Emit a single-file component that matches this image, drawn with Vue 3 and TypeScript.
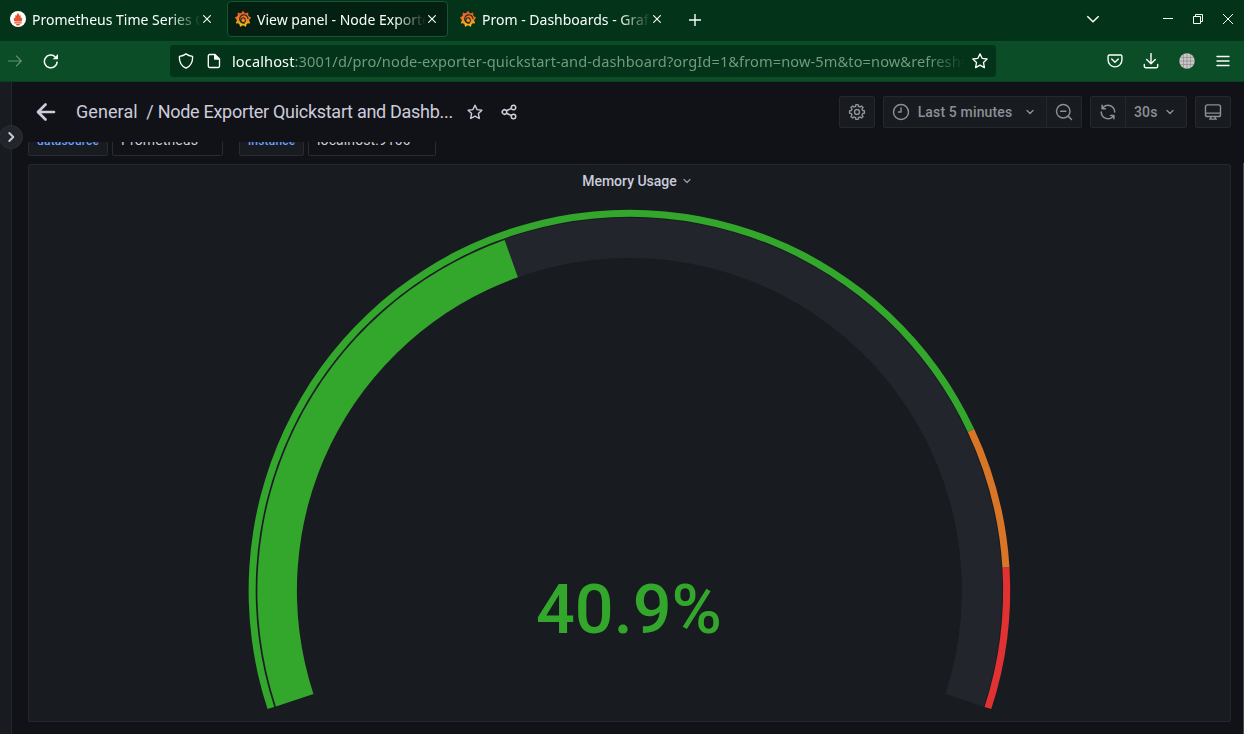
<script setup lang="ts">
interface Tab {
  title: string
  logo: 'prometheus' | 'grafana'
  active: boolean
}

const tabs: Tab[] = [
  { title: 'Prometheus Time Series Collection', logo: 'prometheus', active: false },
  { title: 'View panel - Node Exporter', logo: 'grafana', active: true },
  { title: 'Prom - Dashboards - Grafana', logo: 'grafana', active: false },
]

const cx = 600.4
const cy = 393.5
const startAngle = 198.15
const sweep = 216.3

function point(radius: number, percent: number): [number, number] {
  const angle = ((startAngle - (percent * sweep) / 100) * Math.PI) / 180
  return [cx + radius * Math.cos(angle), cy - radius * Math.sin(angle)]
}

function arc(inner: number, outer: number, from: number, to: number): string {
  const large = ((to - from) * sweep) / 100 > 180 ? 1 : 0
  const f = (p: [number, number]) => `${p[0].toFixed(2)} ${p[1].toFixed(2)}`
  return (
    `M${f(point(outer, from))}A${outer} ${outer} 0 ${large} 1 ${f(point(outer, to))}` +
    `L${f(point(inner, to))}A${inner} ${inner} 0 ${large} 0 ${f(point(inner, from))}Z`
  )
}

function gear(center: number, outer: number, inner: number, teeth: number, topRatio: number): string {
  const step = (Math.PI * 2) / teeth
  const parts: string[] = []
  for (let i = 0; i < teeth; i++) {
    const a = i * step
    const offsets: [number, number][] = [
      [-step * 0.29, inner],
      [-step * topRatio, outer],
      [step * topRatio, outer],
      [step * 0.29, inner],
    ]
    for (const [d, r] of offsets) {
      parts.push(`${(center + r * Math.sin(a + d)).toFixed(2)} ${(center - r * Math.cos(a + d)).toFixed(2)}`)
    }
  }
  return `M${parts.join('L')}Z`
}

const usage = 40.94
const track = arc(332.5, 372.8, 0, 100)
const bar = arc(332.5, 372, 0, usage)
const thresholds = [
  { color: '#32a72c', d: arc(373.7, 380.8, 0, 80) },
  { color: '#d87527', d: arc(373.7, 380.8, 80, 90) },
  { color: '#e03133', d: arc(373.7, 380.8, 90, 100) },
]
const cog = gear(12, 10, 7.9, 8, 0.2)
const sun = gear(8, 8, 6.5, 9, 0.08)
</script>

<template>
  <div class="window">
    <div class="tabbar">
      <div v-for="tab in tabs" :key="tab.title" class="tab" :class="{ active: tab.active }">
        <svg v-if="tab.logo === 'prometheus'" class="logo" viewBox="0 0 16 16">
          <circle cx="8" cy="8" r="8" fill="#fff" />
          <path d="M8 1.4c.3 1.4 1.5 2 1.4 3.7.5-.4.6-.9.6-1.5 1.1 1.4.3 2.6 1.1 4 .2-.5.5-.8.9-1 .1 1.5.6 2.4-.6 4H4.6C3.4 9 3.9 8.200 4 6.600c.4.2.7.5.9 1 .8-1.400 0-2.600 1.100-4 0 .6.1 1.100.6 1.500C6.500 3.400 7.700 2.800 8 1.400ZM4.300 11.300h7.400v1.100H4.300ZM5.900 13h4.200c-.3 1.100-1.100 1.600-2.100 1.600S6.200 14.100 5.900 13Z" fill="#e6522c" />
        </svg>
        <svg v-else class="logo" viewBox="0 0 16 16">
          <defs>
            <linearGradient id="sunfill" x1="0" y1="0" x2="0" y2="1">
              <stop offset="0" stop-color="#f0522b" />
              <stop offset="0.5" stop-color="#f57a24" />
              <stop offset="1" stop-color="#fcc31b" />
            </linearGradient>
          </defs>
          <path :d="sun" fill="url(#sunfill)" />
          <path d="M13 7.600A4.200 4.200 0 1 0 9.300 12.200M10.600 9.600A2.400 2.400 0 1 1 8.300 6.800C9.500 6.700 10.300 7.700 10 8.600" fill="none" stroke="#1c3019" stroke-width="1.100" stroke-linecap="round" />
        </svg>
        <div class="tab-title"><span>{{ tab.title }}</span></div>
        <svg class="tab-close" viewBox="0 0 8 8"><path d="M.3.3 7.700 7.700M7.700.3.3 7.700" /></svg>
      </div>
      <svg class="plus" viewBox="0 0 12 12"><path d="M6 0V12M0 6H12" /></svg>
      <div class="window-controls">
        <svg class="chev" width="14" height="8" viewBox="0 0 14 8"><path d="M1.300 1.200 7 6.700 12.700 1.200" /></svg>
        <svg width="12" height="12" viewBox="0 0 12 12"><path d="M1 5.500H11" /></svg>
        <svg width="12" height="12" viewBox="0 0 12 12"><path d="M1.500 3.500H8.500V10.500H1.500ZM3.500 3.500V1.500H10.500V8.500H8.500" /></svg>
        <svg width="12" height="12" viewBox="0 0 12 12"><path d="M1 1 11 11M11 1 1 11" /></svg>
      </div>
    </div>

    <div class="toolbar">
      <svg class="forward" viewBox="0 0 16 16"><path d="M1 8H14.500M9 2.700 14.300 8 9 13.300" /></svg>
      <svg class="reload" viewBox="0 0 16 16">
        <path d="M14.200 8.600A6.400 6.400 0 1 1 12.400 3.900" />
        <path d="M15 .9V6.200H9.700Z" class="solid" />
      </svg>
      <div class="urlbar">
        <svg class="shield" viewBox="0 0 16 16"><path d="M8 .9C10 2.400 12.200 3 14.500 3.300 15 8.500 12.500 13 8 15.200 3.500 13 1 8.500 1.500 3.300 3.800 3 6 2.400 8 .9Z" /></svg>
        <svg class="page-icon" viewBox="0 0 16 16"><path d="M3.700 1.500H9L13.500 6V13.100A1.400 1.400 0 0 1 12.100 14.500H3.700A1.400 1.400 0 0 1 2.300 13.100V2.900A1.400 1.400 0 0 1 3.700 1.500ZM8.700 1.500V6H13.500" /><path class="solid" d="M9 1.500 13.500 6H9Z" /></svg>
        <div class="url"><span><b>localhost</b>:3001/d/pro/node-exporter-quickstart-and-dashboard?orgId=1&amp;from=now-5m&amp;to=now&amp;refresh=30s</span></div>
        <svg class="bookmark" viewBox="0 0 16 16"><path d="M8 .9 10.100 5.300 15.100 6 11.500 9.500 12.400 14.600 8 12.200 3.600 14.600 4.500 9.500 .9 6 5.900 5.300Z" /></svg>
      </div>
      <div class="actions">
        <svg viewBox="0 0 16 16"><path d="M2.300 2H13.700A1.200 1.200 0 0 1 14.900 3.200V7A6.900 6.900 0 0 1 1.100 7V3.200A1.200 1.200 0 0 1 2.300 2ZM4.700 6 8 9.200 11.300 6" /></svg>
        <svg viewBox="0 0 16 16"><path d="M8 .5V10.500M3.700 6.500 8 10.800 12.300 6.500M1.300 11.500V13.200A1.500 1.500 0 0 0 2.800 14.700H13.200A1.500 1.500 0 0 0 14.700 13.200V11.500" /></svg>
        <svg viewBox="0 0 16 16">
          <circle cx="8" cy="8" r="7.700" fill="#c8c8c8" stroke="none" />
          <path class="grid" d="M8 .5V15.500M4.500 1.500V14.500M11.500 1.500V14.500M.5 8H15.500M1.500 4.500H14.500M1.500 11.500H14.500" />
        </svg>
        <svg viewBox="0 0 16 16"><path d="M2 3.500H14M2 8H14M2 12.500H14" /></svg>
      </div>
    </div>

    <div class="app">
      <aside class="rail">
        <button class="expand"><svg viewBox="0 0 12 12"><path d="M4.300 2 8.300 6 4.300 10" /></svg></button>
      </aside>
      <main class="content">
        <header class="topnav">
          <svg class="back" viewBox="0 0 20 20"><path d="M18 10H2.500M9.500 2.500 2 10 9.500 17.500" /></svg>
          <h1><span class="folder">General</span><span class="slash">/</span><span class="dashboard">Node Exporter Quickstart and Dashb...</span></h1>
          <svg class="star" viewBox="0 0 16 16"><path d="M8 1.200 10.100 5.600 14.900 6.200 11.400 9.600 12.300 14.500 8 12.100 3.700 14.500 4.600 9.600 1.100 6.200 5.900 5.600Z" /></svg>
          <svg class="share" viewBox="0 0 24 24"><path d="M18,14a4,4,0,0,0-3.080,1.480l-5.100-2.350a3.640,3.640,0,0,0,0-2.260l5.100-2.350A4,4,0,1,0,14,6a4.170,4.170,0,0,0,.07.71L8.790,9.140a4,4,0,1,0,0,5.720l5.280,2.430A4.170,4.170,0,0,0,14,18a4,4,0,1,0,4-4ZM18,4a2,2,0,1,1-2,2A2,2,0,0,1,18,4ZM6,14a2,2,0,1,1,2-2A2,2,0,0,1,6,14Zm12,6a2,2,0,1,1,2-2A2,2,0,0,1,18,20Z" /></svg>
          <div class="tools">
            <div class="group"><button class="square"><svg viewBox="0 0 24 24"><path :d="cog" /><circle cx="12" cy="12" r="3.300" /></svg></button></div>
            <div class="group">
              <button class="range">
                <svg viewBox="0 0 24 24"><circle cx="12" cy="12" r="10" /><path d="M12 6.500V12H8.500" /></svg>
                <span>Last 5 minutes</span>
                <svg class="caret" viewBox="0 0 14 14"><path d="M4 5.500 7 8.500 10 5.500" /></svg>
              </button>
              <button class="square"><svg viewBox="0 0 24 24"><circle cx="11" cy="11" r="9" /><path d="M7.500 11H14.500M17.500 17.500 22 22" /></svg></button>
            </div>
            <div class="group">
              <button class="square"><svg viewBox="0 0 24 24" class="filled"><path d="M19.910,15.510H15.380a1,1,0,0,0,0,2h2.400A8,8,0,0,1,4,12a1,1,0,1,0-2,0,10,10,0,0,0,16.880,7.230V21a1,1,0,0,0,2,0V16.500A1,1,0,0,0,19.910,15.510ZM12,2A10,10,0,0,0,5.120,4.770V3a1,1,0,0,0-2,0V7.500a1,1,0,0,0,1,1h4.500a1,1,0,0,0,0-2H6.220A8,8,0,0,1,20,12a1,1,0,0,0,2,0A10,10,0,0,0,12,2Z" /></svg></button>
              <button class="interval"><span>30s</span><svg class="caret" viewBox="0 0 14 14"><path d="M4 5.500 7 8.500 10 5.500" /></svg></button>
            </div>
            <div class="group"><button class="square"><svg viewBox="0 0 24 24"><path d="M4.500 2.500H19.500A2.500 2.500 0 0 1 22 5V15.500A2.500 2.500 0 0 1 19.500 18H4.500A2.500 2.500 0 0 1 2 15.500V5A2.500 2.500 0 0 1 4.500 2.500ZM2 13.500H22M9 18V21.500M15 18V21.500M7.500 21.500H16.500" /></svg></button></div>
          </div>
        </header>
        <div class="variables">
          <label class="name ds">datasource</label><div class="value ds-value">Prometheus</div>
          <label class="name inst">instance</label><div class="value inst-value">localhost:9100</div>
        </div>
        <section class="panel">
          <h2>Memory Usage<svg class="caret" viewBox="0 0 14 14"><path d="M4 5.500 7 8.500 10 5.500" /></svg></h2>
          <svg class="gauge" width="1201" height="524" viewBox="0 0 1201 524">
            <path :d="track" fill="#22252b" />
            <path :d="bar" fill="#32a72c" />
            <path v-for="t in thresholds" :key="t.color" :d="t.d" :fill="t.color" />
            <text x="600" y="436" text-anchor="middle">{{ usage.toFixed(1) }}%</text>
          </svg>
        </section>
        <div class="scroll-thumb"></div>
      </main>
    </div>
  </div>
</template>

<style>
html,
body {
  margin: 0;
  background: #111217;
  overflow: hidden;
}
</style>

<style scoped>
* { box-sizing: border-box; }
svg { display: block; flex: none; fill: none; stroke: currentColor; }
button { font: inherit; letter-spacing: inherit; color: inherit; padding: 0; margin: 0; border: 0; background: none; }
.window { width: 1244px; height: 734px; display: flex; flex-direction: column; overflow: hidden; color: #fbfffc; font-family: 'Noto Sans', 'Open Sans', sans-serif; }

.tabbar { height: 41px; background: #033318; display: flex; align-items: flex-start; padding: 1px 0 0 2px; gap: 4px; }
.tab { width: 221px; height: 36px; display: flex; align-items: center; border: 1px solid transparent; border-radius: 4px; padding-left: 7px; }
.tab.active { background: #042012; border-color: #155632; }
.logo { width: 16px; height: 16px; stroke: none; }
.tab-title { margin-left: 6px; width: 171px; overflow: hidden; white-space: nowrap; font-size: 14px; line-height: 22px; padding-top: 1px; -webkit-mask-image: linear-gradient(to right, #000 137px, transparent 169px); mask-image: linear-gradient(to right, #000 137px, transparent 169px); }
.tab-close { width: 8px; height: 8px; stroke-width: 1.1; }
.plus { width: 12px; height: 12px; margin: 13px 0 0 12px; stroke-width: 1.4; }
.window-controls { margin-left: auto; display: flex; align-items: center; height: 36px; gap: 18px; padding-right: 10px; }
.chev { margin-right: 44px; stroke-width: 1.5; }

.toolbar { height: 41px; background: #0a4d27; display: flex; align-items: center; padding-left: 7px; border-bottom: 1px solid #07421f; }
.forward { width: 16px; height: 16px; color: #63917a; stroke-width: 1.2; }
.reload { width: 16px; height: 16px; margin-left: 20px; stroke-width: 1.5; }
.solid { fill: currentColor; stroke: none; }
.urlbar { width: 826px; height: 32px; margin-left: 111px; border-radius: 4px; background: #033318; display: flex; align-items: center; padding-left: 8px; }
.shield, .page-icon, .bookmark { width: 16px; height: 16px; stroke-width: 1.35; stroke-linejoin: round; }
.page-icon { margin-left: 12px; }
.url { margin-left: 10px; width: 732px; overflow: hidden; white-space: nowrap; font-size: 14.6px; letter-spacing: .1px; line-height: 24px; color: #729a80; -webkit-mask-image: linear-gradient(to right, #000 696px, transparent 734px); mask-image: linear-gradient(to right, #000 696px, transparent 734px); }
.url b { font-weight: 400; color: #fbfffc; }
.bookmark { margin-left: 8px; }
.actions { display: flex; gap: 20px; margin-left: 111px; }
.actions svg { width: 16px; height: 16px; stroke-width: 1.4; stroke-linecap: round; stroke-linejoin: round; }
.actions .grid { stroke: #8d8d8d; stroke-width: .7; }

.app { flex: 1; min-height: 0; display: flex; background: #111217; color: #ccccdc; font-family: Roboto, sans-serif; }
.rail { position: relative; width: 12px; background: #181b1f; border-right: 1px solid #25272c; z-index: 1; }
.expand { position: absolute; left: -1px; top: 43px; width: 24px; height: 24px; border-radius: 50%; background: #22252b; border: 1px solid #2b2e34; display: grid; place-items: center; }
.expand svg { width: 12px; height: 12px; stroke-width: 1.9; stroke-linecap: round; stroke-linejoin: round; }
.content { position: relative; flex: 1; padding: 0 13px 0 16px; }
.topnav { height: 60px; display: flex; align-items: center; padding-left: 8px; }
.back { width: 20px; height: 20px; stroke-width: 2.7; stroke-linecap: round; stroke-linejoin: round; }
h1 { margin: 0 0 0 20px; font-size: 18px; font-weight: 400; line-height: 24px; display: flex; white-space: nowrap; }
.folder { letter-spacing: .08px; }
.slash { margin: 0 4px 0 8.500px; }
.dashboard { letter-spacing: -.29px; }
.star { width: 16px; height: 16px; margin-left: 14px; stroke-width: 1.4; stroke-linejoin: round; }
.share { width: 18px; height: 18px; margin-left: 17px; fill: currentColor; stroke: none; }
.tools { margin-left: auto; display: flex; gap: 8px; color: #8e8f99; font-size: 14px; font-weight: 500; letter-spacing: .15px; }
.group { display: flex; height: 32px; border: 1px solid #25272c; border-radius: 2px; background: #181b1f; }
.group button { display: flex; align-items: center; }
.group button + button { border-left: 1px solid #25272c; }
.group svg { width: 18px; height: 18px; stroke-width: 1.9; stroke-linecap: round; stroke-linejoin: round; }
.group .filled { fill: currentColor; stroke: none; }
.square { width: 34px; justify-content: center; }
.group .square + .interval { width: 61px; padding-left: 8px; }
.range { width: 162px; padding-left: 8px; }
.range + .square { width: 35px; }
.range span { margin-left: 7px; width: 96px; }
.group .caret, .caret { width: 14px; height: 14px; stroke-width: 1.4; stroke-linecap: round; stroke-linejoin: round; }
.range .caret { margin-left: 10px; }
.interval .caret { margin-left: 5px; }

.variables { height: 14px; overflow: hidden; display: flex; align-items: flex-end; font-size: 14px; letter-spacing: .12px; }
.variables > * { flex: none; height: 32px; line-height: 31px; border: 1px solid #2a2c31; border-radius: 2px; padding-left: 8px; white-space: nowrap; }
.variables .name { font-size: 12px; line-height: 32px; font-weight: 500; background: #181b1f; color: #6e9fff; letter-spacing: .2px; }
.ds { width: 80px; }
.ds-value { width: 111px; margin: 0 16px 0 4px; }
.inst { width: 65px; }
.inst-value { width: 128px; margin-left: 4px; }
.panel { width: 1203px; height: 558px; margin-top: 8px; border: 1px solid #25272c; border-radius: 2px; background: #181b1f; }
h2 { height: 32px; margin: 0; display: flex; align-items: center; justify-content: center; font-size: 14px; font-weight: 500; padding-left: 17px; }
h2 .caret { margin-left: 3px; color: #9a9aa8; stroke-width: 1.2; }
.gauge { stroke: none; }
.gauge text { font: 500 68.400px Roboto, sans-serif; fill: #32a72c; }
.scroll-thumb { position: absolute; right: 0; top: 81px; width: 1px; bottom: 0; background: #4a4c50; }
</style>
